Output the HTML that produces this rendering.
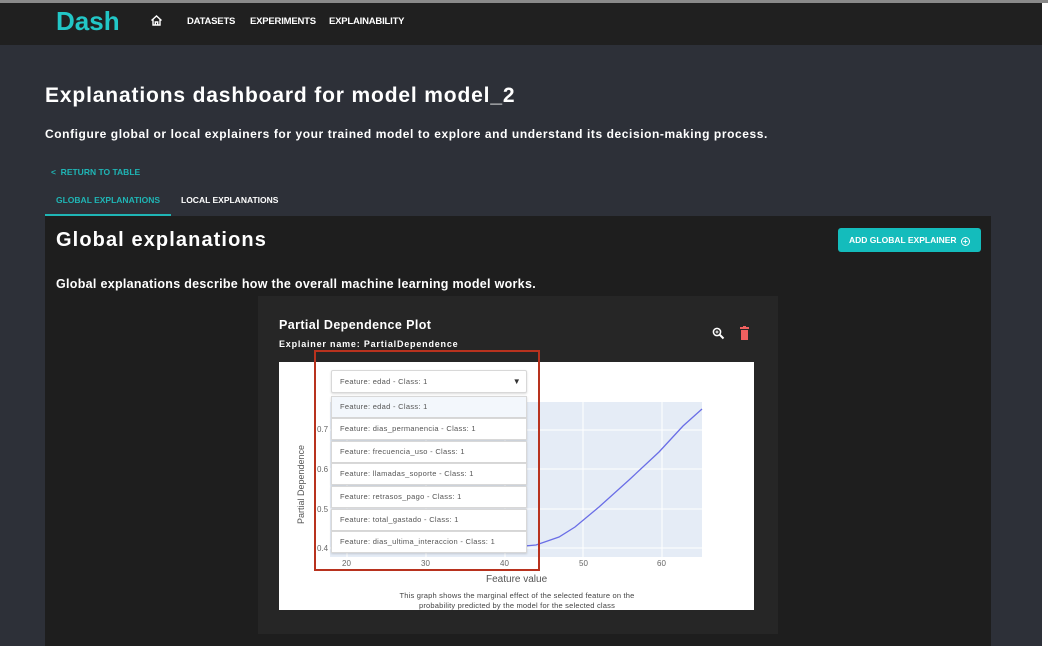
<!DOCTYPE html>
<html><head><meta charset="utf-8">
<style>
*{margin:0;padding:0;box-sizing:border-box}
body{width:1048px;height:646px;background:#fff;font-family:"Liberation Sans",sans-serif;position:relative;overflow:hidden}
.a{position:absolute;white-space:nowrap}
.page{left:0;top:3px;width:1042px;height:643px;background:#2d3038}
.top{left:0;top:0;width:1048px;height:3px;background:#8a8a8a}
.hdr{left:0;top:3px;width:1042px;height:42px;background:#202020}
.nav{color:#fff;font-size:9.5px;font-weight:bold;top:16px;letter-spacing:-0.2px}
.opt{left:331px;width:196px;height:22px;background:#fff;border:1px solid #d8d8d8;font-size:7.5px;color:#555;padding-left:8px;line-height:20px;box-shadow:0 1px 2px rgba(0,0,0,.15);letter-spacing:0.3px}
.yt{font-size:8px;color:#666}
.xt{font-size:8px;color:#666;top:559px}
</style></head><body>
<div class="a top"></div>
<div class="a page"></div>
<div class="a hdr"></div>
<div class="a" style="left:56px;top:6px;font-size:26px;font-weight:bold;color:#22c6c6;letter-spacing:0px">Dash</div>
<svg class="a" style="left:150px;top:14px" width="13" height="13" viewBox="0 0 13 13"><path d="M1.5 6.5L6.5 2l5 4.5M3 5.5V11h7V5.5M5.3 11V8h2.4v3" fill="none" stroke="#fff" stroke-width="1.4"/></svg>
<div class="a nav" style="left:187px">DATASETS</div>
<div class="a nav" style="left:250px">EXPERIMENTS</div>
<div class="a nav" style="left:329px">EXPLAINABILITY</div>

<div class="a" style="left:45px;top:84px;font-size:21px;color:#fff;font-weight:bold;letter-spacing:0.85px">Explanations dashboard for model model_2</div>
<div class="a" style="left:45px;top:127px;font-size:12px;color:#fff;font-weight:bold;letter-spacing:0.58px">Configure global or local explainers for your trained model to explore and understand its decision-making process.</div>
<div class="a" style="left:51px;top:167px;font-size:8.5px;color:#1fb5b5;font-weight:bold">&lt;&nbsp;&nbsp;RETURN TO TABLE</div>
<div class="a" style="left:56px;top:195px;font-size:8.5px;color:#1fb5b5;font-weight:bold">GLOBAL EXPLANATIONS</div>
<div class="a" style="left:181px;top:195px;font-size:8.5px;color:#fff;font-weight:bold">LOCAL EXPLANATIONS</div>
<div class="a" style="left:45px;top:214px;width:126px;height:2px;background:#1fb5b5"></div>

<div class="a" style="left:45px;top:216px;width:946px;height:430px;background:#1e1e1e"></div>
<div class="a" style="left:56px;top:229px;font-size:20px;color:#fff;font-weight:bold;letter-spacing:1.1px">Global explanations</div>
<div class="a" style="left:838px;top:228px;width:143px;height:24px;background:#14bcbc;border-radius:3px;color:#fff;font-size:8.5px;font-weight:bold;line-height:24px;padding-left:11px">ADD GLOBAL EXPLAINER <span style="display:inline-block;width:9px;height:9px;border:1px solid #fff;border-radius:50%;font-size:8px;line-height:7px;text-align:center;vertical-align:-1px;margin-left:2px">+</span></div>
<div class="a" style="left:56px;top:277px;font-size:12.5px;color:#fff;font-weight:bold;letter-spacing:0.3px">Global explanations describe how the overall machine learning model works.</div>

<div class="a" style="left:258px;top:296px;width:520px;height:338px;background:#262626"></div>
<div class="a" style="left:279px;top:318px;font-size:12.5px;color:#fff;font-weight:bold;letter-spacing:0.4px">Partial Dependence Plot</div>
<div class="a" style="left:279px;top:339px;font-size:9px;color:#fff;font-weight:bold;letter-spacing:0.8px">Explainer name: PartialDependence</div>
<svg class="a" style="left:712px;top:327px" width="13" height="13" viewBox="0 0 13 13"><circle cx="5" cy="5" r="3.6" fill="none" stroke="#fff" stroke-width="1.5"/><path d="M7.7 7.7L11.5 11.5" stroke="#fff" stroke-width="2"/><path d="M3.5 5h3M5 3.5v3" stroke="#fff" stroke-width="1"/></svg>
<svg class="a" style="left:739px;top:326px" width="11" height="14" viewBox="0 0 11 14"><rect x="1" y="1" width="9" height="2" fill="#f0605f"/><rect x="4" y="0" width="3" height="1.5" fill="#f0605f"/><rect x="2" y="4" width="7" height="10" fill="#f0605f"/></svg>

<div class="a" style="left:279px;top:362px;width:475px;height:248px;background:#fff"></div>
<svg class="a" style="left:279px;top:362px" width="475" height="248">
<rect x="51" y="40" width="372" height="155" fill="#e5ecf6"/>
<g stroke="#fff" stroke-width="1">
<line x1="51" y1="68" x2="423" y2="68"/><line x1="51" y1="107" x2="423" y2="107"/><line x1="51" y1="147" x2="423" y2="147"/><line x1="51" y1="186" x2="423" y2="186"/>
<line x1="68" y1="40" x2="68" y2="195"/><line x1="147" y1="40" x2="147" y2="195"/><line x1="226" y1="40" x2="226" y2="195"/><line x1="304" y1="40" x2="304" y2="195"/><line x1="383" y1="40" x2="383" y2="195"/>
</g>
<path d="M60 188 L200 188 L257 183 L280 175 L296 165 L320 145 L350 118 L380 90 L404 64 L423 47" fill="none" stroke="#6a6ee6" stroke-width="1.3"/>
</svg>
<div class="a yt" style="left:317px;top:425px">0.7</div>
<div class="a yt" style="left:317px;top:465px">0.6</div>
<div class="a yt" style="left:317px;top:505px">0.5</div>
<div class="a yt" style="left:317px;top:544px">0.4</div>
<div class="a xt" style="left:342px">20</div>
<div class="a xt" style="left:421px">30</div>
<div class="a xt" style="left:500px">40</div>
<div class="a xt" style="left:579px">50</div>
<div class="a xt" style="left:657px">60</div>
<div class="a" style="left:296px;top:524px;transform:rotate(-90deg);transform-origin:0 0;font-size:9px;color:#555">Partial Dependence</div>
<div class="a" style="left:486px;top:574px;font-size:10px;color:#555">Feature value</div>
<div class="a" style="left:386px;top:591px;width:262px;text-align:center;font-size:7.5px;color:#444;line-height:10px;white-space:normal;letter-spacing:0.2px">This graph shows the marginal effect of the selected feature on the probability predicted by the model for the selected class</div>
<div class="a" style="left:279px;top:610px;width:475px;height:24px;background:#262626"></div>

<div class="a opt" style="top:370px;height:23px;line-height:21px;border-radius:2px">Feature: edad - Class: 1<span style="position:absolute;right:5px;color:#333;font-size:8px">▼</span></div>
<div class="a opt" style="top:396px;background:#f3f7fc">Feature: edad - Class: 1</div>
<div class="a opt" style="top:418px">Feature: dias_permanencia - Class: 1</div>
<div class="a opt" style="top:441px">Feature: frecuencia_uso - Class: 1</div>
<div class="a opt" style="top:463px">Feature: llamadas_soporte - Class: 1</div>
<div class="a opt" style="top:486px">Feature: retrasos_pago - Class: 1</div>
<div class="a opt" style="top:509px">Feature: total_gastado - Class: 1</div>
<div class="a opt" style="top:531px">Feature: dias_ultima_interaccion - Class: 1</div>
<div class="a" style="left:314px;top:350px;width:226px;height:221px;border:2px solid #b8321e"></div>
</body></html>
